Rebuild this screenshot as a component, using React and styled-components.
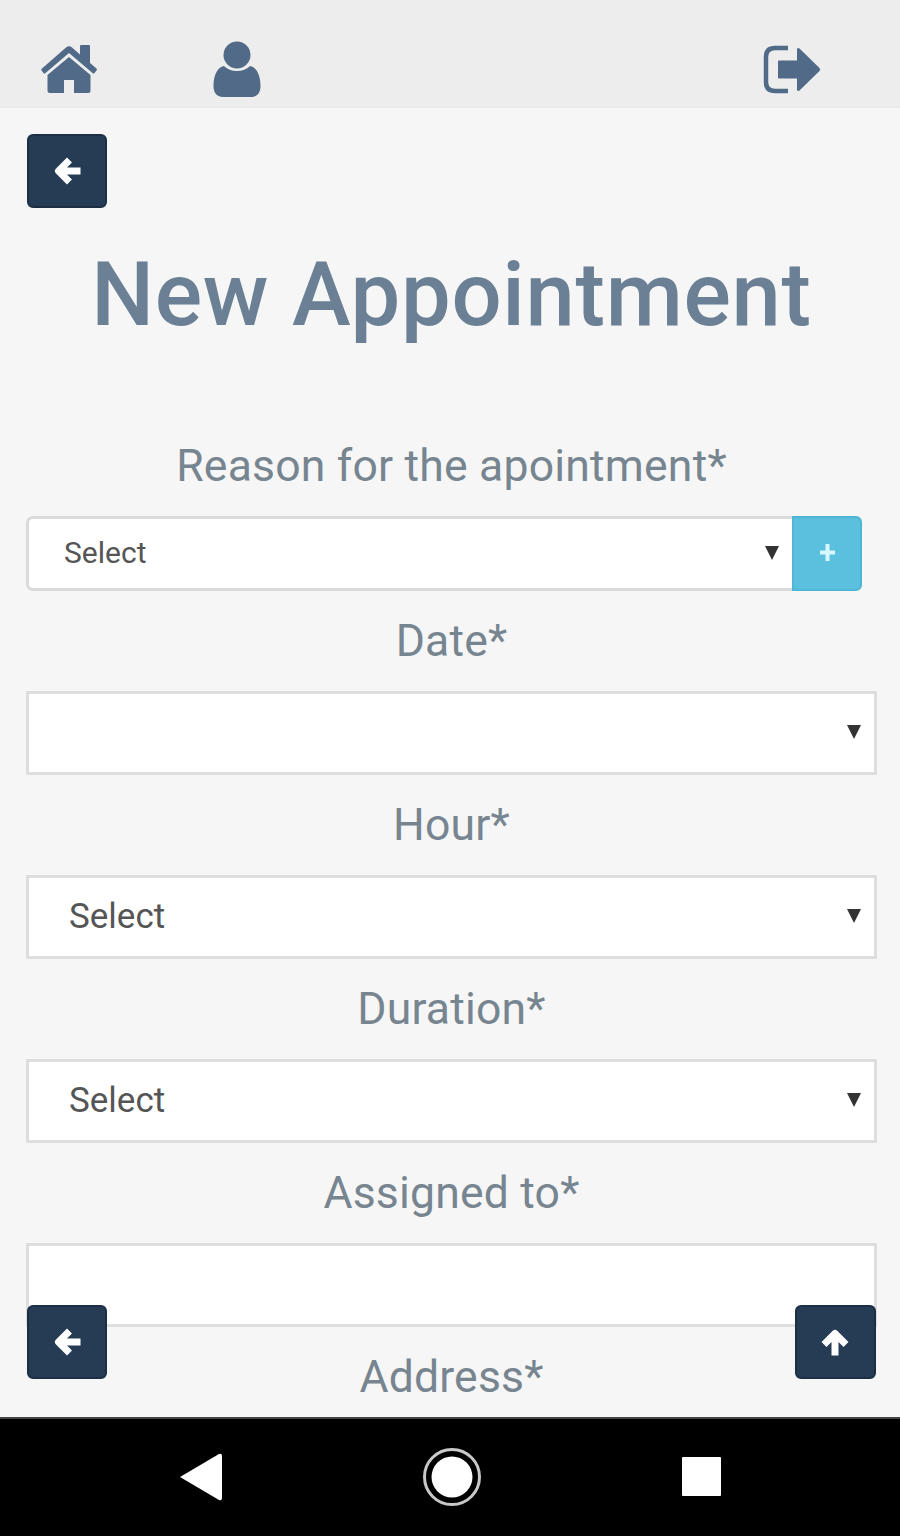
import React from 'react';
import styled, {createGlobalStyle} from 'styled-components';

const GlobalStyle = createGlobalStyle`
body {
margin: 0;
background-color: #f6f6f6;
font-family: Roboto, "Liberation Sans", sans-serif;
}
`;

const Screen = styled.div`
display: flex;
flex-direction: column;
width: 900px;
height: 1536px;
overflow: hidden;
`;

const TopBar = styled.header`
display: flex;
align-items: flex-start;
box-sizing: border-box;
height: 108px;
padding: 40px 79px 0 40px;
background-color: #ededed;
border-bottom: 2px solid #e9e9e9;
color: #506a88;
`;

const TopLink = styled.a`
display: flex;
margin-left: ${({push}) => push || '0'};
padding-top: ${({drop}) => drop || 0}px;
`;

const Content = styled.main`
position: relative;
flex: 1;
box-sizing: border-box;
min-height: 0;
padding: 26px 23px 0 26px;
overflow: hidden;
background-color: #f6f6f6;
`;

const SquareButton = styled.button`
display: flex;
align-items: center;
justify-content: center;
width: ${({wide}) => wide ? 81 : 80}px;
height: 74px;
margin: 0 0 0 1px;
padding: ${({wide}) => wide ? '0 2px 0 0' : 0};
background-color: #263c55;
border: 2px solid #1c2f45;
border-radius: 6px;
color: #fff;
`;

const FloatingButtons = styled.div`
position: absolute;
left: 26px;
right: 24px;
bottom: 38px;
display: flex;
justify-content: space-between;
`;

const Title = styled.h1`
height: 104px;
margin: 34px 0 70px;
color: #6b8095;
font-size: 88.500px;
font-weight: 500;
line-height: 106px;
text-align: center;
white-space: nowrap;
letter-spacing: 0.7px;
`;

const Label = styled.label`
display: block;
height: 100px;
color: #76858f;
font-size: 44.500px;
line-height: 101px;
text-align: center;
white-space: nowrap;
letter-spacing: 0.2px;
`;

const InputGroup = styled.div`
display: flex;
width: 836px;
`;

const SelectBox = styled.div`
display: flex;
flex: 1;
align-items: center;
justify-content: space-between;
box-sizing: border-box;
height: ${({small}) => small ? 75 : 84}px;
padding: ${({small}) => small ? '0 13px 2px 35px' : '0 13px 2px 40px'};
background-color: #fff;
border: ${({small}) => small ? '3px solid #dadada' : '3px solid #dedede'};
border-right-width: ${({small}) => small ? 0 : 3}px;
border-radius: ${({small}) => small ? '7px 0 0 7px' : 0};
color: #555;
font-size: ${({small}) => small ? 30 : 35}px;
`;

const AddButton = styled.button`
display: flex;
align-items: center;
justify-content: center;
width: 70px;
height: 75px;
padding: 0 0 2px;
background-color: #5bc0de;
border: 2px solid #50b6d5;
border-radius: 0 6px 6px 0;
color: #d9f7ff;
`;

const NavBar = styled.nav`
display: flex;
align-items: center;
box-sizing: border-box;
height: 119px;
padding: 0 179px 2px 180px;
justify-content: space-between;
background-color: #000;
border-top: 2px solid #444;
color: #fff;
`;

const HomeIcon = () => (
    <svg width="58" height="54" viewBox="0 0 58 54" fill="currentColor">
        <path d="M7.500 35 29 17 50.500 35V50.500Q50.500 53 48 53H34V40H24V53H10Q7.500 53 7.500 50.500Z" />
        <path d="M2 28.500 26 7.500Q29 5 32 7.500L40 14.500V6Q40 5 41 5H49Q50 5 50 6V23L56.500 28.500Q57.500 29.500 56.500 30.500L54.500 33Q53.500 34 52.500 33L29 13 5.500 33Q4.500 34 3.500 33L1.500 30.500Q.7 29.500 2 28.500Z" />
    </svg>
);

const UserIcon = () => (
    <svg width="48" height="58" viewBox="0 0 48 58" fill="currentColor">
        <circle cx="24" cy="15" r="13.5" />
        <path d="M11 26Q16 31 24 31T37 26C44 27 47.500 36 47.500 46 47.500 53 44 57 38 57H10C4 57 .5 53 .5 46 .5 36 4 27 11 26Z" />
    </svg>
);

const SignOutIcon = () => (
    <svg width="58" height="50" viewBox="0 0 58 50" fill="currentColor">
        <path d="M25 3H12Q3 3 3 12V37Q3 46 12 46H25" fill="none" stroke="currentColor" strokeWidth="4.500" />
        <path d="M16 15.500H34V4Q35 2 37 4L56.500 23Q58 24.500 56.500 26L37 45Q35 47 34 45V33.500H16Q15 33.500 15 32.500V16.500Q15 15.500 16 15.500Z" />
    </svg>
);

const ArrowIcon = ({up}) => (
    <svg width="28" height="28" viewBox="0 0 28 28" fill="none" stroke="currentColor" strokeWidth="7" strokeLinejoin="round">
        <path d={up ? 'M14 27.500V7M3 16.500 14 5.500 25 16.500' : 'M27.500 14H7M16.500 3 5.500 14 16.500 25'} />
    </svg>
);

const Caret = () => (
    <svg width="14" height="14" viewBox="0 0 14 14" fill="#333">
        <path d="M0 0H14L7 14Z" />
    </svg>
);

const PlusIcon = () => (
    <svg width="15" height="17" viewBox="0 0 15 17" fill="none" stroke="currentColor" strokeWidth="4">
        <path d="M7.500 0V17M0 8.500H15" />
    </svg>
);

const fields = [
    {id: 'date', label: 'Date*', value: '', caret: true},
    {id: 'hour', label: 'Hour*', value: 'Select', caret: true},
    {id: 'duration', label: 'Duration*', value: 'Select', caret: true},
    {id: 'assigned', label: 'Assigned to*', value: '', caret: false},
];

export default function App() {
    const renderField = ({id, label, value, caret}) => {
        return (
            <div key={id}>
                <Label>{label}</Label>
                <SelectBox>
                    <span>{value}</span>
                    {caret && <Caret />}
                </SelectBox>
            </div>
        );
    }

    return (
        <Screen>
            <GlobalStyle />
            <TopBar>
                <TopLink><HomeIcon /></TopLink>
                <TopLink push="115px"><UserIcon /></TopLink>
                <TopLink push="auto" drop={5}><SignOutIcon /></TopLink>
            </TopBar>
            <Content>
                <SquareButton><ArrowIcon /></SquareButton>
                <Title>New Appointment</Title>
                <Label>Reason for the apointment*</Label>
                <InputGroup>
                    <SelectBox small>
                        <span>Select</span>
                        <Caret />
                    </SelectBox>
                    <AddButton><PlusIcon /></AddButton>
                </InputGroup>
                {fields.map(renderField)}
                <Label>Address*</Label>
                <FloatingButtons>
                    <SquareButton><ArrowIcon /></SquareButton>
                    <SquareButton wide><ArrowIcon up /></SquareButton>
                </FloatingButtons>
            </Content>
            <NavBar>
                <svg width="42" height="48" viewBox="0 0 42 48" fill="currentColor">
                    <path d="M0 24 39 1Q42 0 42 3V45Q42 48 39 47Z" />
                </svg>
                <svg width="58" height="58" viewBox="0 0 58 58" fill="currentColor">
                    <circle cx="29" cy="29" r="27.500" fill="none" stroke="#c8c8c8" strokeWidth="3" />
                    <circle cx="29" cy="29" r="20.500" />
                </svg>
                <svg width="39" height="39" viewBox="0 0 39 39" fill="currentColor">
                    <rect width="39" height="39" rx="1" />
                </svg>
            </NavBar>
        </Screen>
    )
}
